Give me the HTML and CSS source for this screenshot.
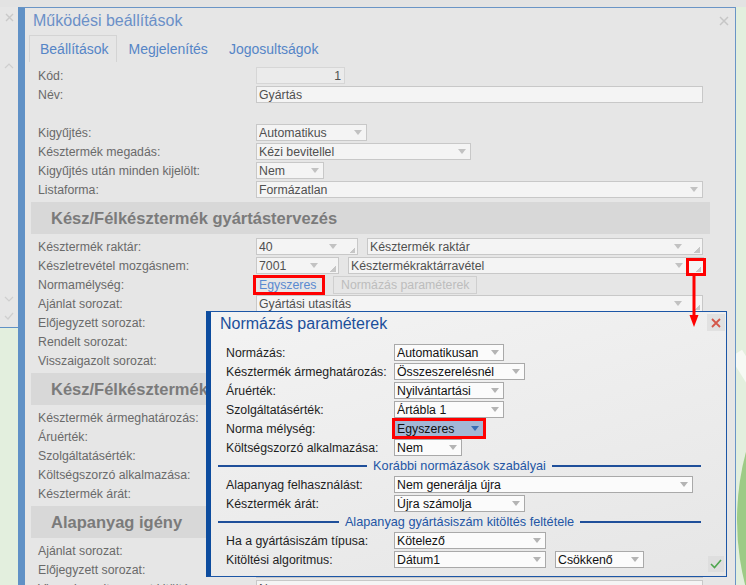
FILE: index.html
```html
<!DOCTYPE html>
<html lang="hu">
<head>
<meta charset="utf-8">
<title>Működési beállítások</title>
<link rel="stylesheet" href="styles.css">
</head>
<body>
<div class="topstrip"></div>
<div class="sidebar">
  <svg class="sb-x" width="9" height="9" viewBox="0 0 9 9"><path d="M1 1L8 8M8 1L1 8" stroke="#c9c9c9" stroke-width="1.4" fill="none"/></svg>
  <svg class="sb-up" width="10" height="6" viewBox="0 0 10 6"><polyline points="1,5 5,1 9,5" stroke="#cfcfcf" stroke-width="1.2" fill="none"/></svg>
  <div class="sb-fill"></div>
  <svg class="sb-down" width="10" height="6" viewBox="0 0 10 6"><polyline points="1,1 5,5 9,1" stroke="#cfcfcf" stroke-width="1.2" fill="none"/></svg>
  <svg class="sb-chk" width="10" height="8" viewBox="0 0 10 8"><polyline points="1,4 4,7 9,1" stroke="#cfcfcf" stroke-width="1.2" fill="none"/></svg>
</div>
<div class="deco-white"></div>
<div class="deco-green"></div>

<div class="win">
  <div class="win-head">
    <span class="win-title">Működési beállítások</span>
    <svg class="win-x" width="10" height="10" viewBox="0 0 10 10"><path d="M1 1L9 9M9 1L1 9" stroke="#c6c6c6" stroke-width="1.5" fill="none"/></svg>
  </div>
  <div class="tabs">
    <div class="tab active">Beállítások</div>
    <div class="tab">Megjelenítés</div>
    <div class="tab">Jogosultságok</div>
  </div>
  <div class="form">
    <div class="row"><span class="lbl">Kód:</span><div class="inp w89 ro"><span class="val right">1</span></div></div>
    <div class="row"><span class="lbl">Név:</span><div class="inp w447"><span class="val">Gyártás</span></div></div>
    <div class="row"></div>
    <div class="row"><span class="lbl">Kigyűjtés:</span><div class="inp w111"><span class="val">Automatikus</span><span class="dd"></span></div></div>
    <div class="row"><span class="lbl">Késztermék megadás:</span><div class="inp w215"><span class="val">Kézi bevitellel</span><span class="dd"></span></div></div>
    <div class="row"><span class="lbl">Kigyűjtés után minden kijelölt:</span><div class="inp w68"><span class="val">Nem</span><span class="dd"></span></div></div>
    <div class="row"><span class="lbl">Listaforma:</span><div class="inp w447"><span class="val">Formázatlan</span><span class="dd"></span></div></div>

    <div class="sec">Kész/Félkésztermék gyártástervezés</div>
    <div class="row"><span class="lbl">Késztermék raktár:</span><div class="inp w102"><span class="val">40</span><span class="dd"></span><span class="rz"></span></div><div class="inp w336 gap"><span class="val">Késztermék raktár</span><span class="dd"></span><span class="rz"></span></div></div>
    <div class="row"><span class="lbl">Készletrevétel mozgásnem:</span><div class="inp w83"><span class="val">7001</span><span class="dd"></span><span class="rz"></span></div><div class="inp w356 gap"><span class="val">Késztermékraktárravétel</span><span class="dd"></span><span class="rz hl"></span></div></div>
    <div class="row"><span class="lbl">Normamélység:</span><span class="link hl">Egyszeres</span><span class="btn">Normázás paraméterek</span></div>
    <div class="row"><span class="lbl">Ajánlat sorozat:</span><div class="inp w447"><span class="val">Gyártási utasítás</span><span class="dd"></span><span class="rz"></span></div></div>
    <div class="row"><span class="lbl">Előjegyzett sorozat:</span><div class="inp w447"><span class="val">Gyártási utasítás</span><span class="dd"></span></div></div>
    <div class="row"><span class="lbl">Rendelt sorozat:</span><div class="inp w447"><span class="val">Gyártási utasítás</span><span class="dd"></span></div></div>
    <div class="row"><span class="lbl">Visszaigazolt sorozat:</span><div class="inp w447"><span class="val">Gyártási utasítás</span><span class="dd"></span></div></div>

    <div class="sec">Kész/Félkésztermék árképzés</div>
    <div class="row"><span class="lbl">Késztermék ármeghatározás:</span><div class="inp w215"><span class="val">Összeszerelésnél</span><span class="dd"></span></div></div>
    <div class="row"><span class="lbl">Áruérték:</span><div class="inp w215"><span class="val">Nyilvántartási</span><span class="dd"></span></div></div>
    <div class="row"><span class="lbl">Szolgáltatásérték:</span><div class="inp w215"><span class="val">Ártábla 1</span><span class="dd"></span></div></div>
    <div class="row"><span class="lbl">Költségszorzó alkalmazása:</span><div class="inp w68"><span class="val">Nem</span><span class="dd"></span></div></div>
    <div class="row"><span class="lbl">Késztermék árát:</span><div class="inp w215"><span class="val">Újra számolja</span><span class="dd"></span></div></div>

    <div class="sec">Alapanyag igény</div>
    <div class="row"><span class="lbl">Ajánlat sorozat:</span><div class="inp w447"><span class="val">Anyagigénylés</span><span class="dd"></span></div></div>
    <div class="row"><span class="lbl">Előjegyzett sorozat:</span><div class="inp w447"><span class="val">Anyagigénylés</span><span class="dd"></span></div></div>
    <div class="row"><span class="lbl">Visszaigazolt sorozat kitöltése:</span><div class="inp w447"><span class="val">Nem</span><span class="dd"></span></div></div>
  </div>
</div>

<div class="dlg">
  <div class="dlg-head">
    <span class="dlg-title">Normázás paraméterek</span>
    <span class="dlg-x"><svg width="10" height="10" viewBox="0 0 10 10"><path d="M1 1L9 9M9 1L1 9" stroke="#d4574a" stroke-width="1.8" fill="none"/></svg></span>
  </div>
  <div class="dlg-form">
    <div class="drow"><span class="dlbl">Normázás:</span><div class="dsel d110"><span class="val">Automatikusan</span><span class="dd"></span></div></div>
    <div class="drow"><span class="dlbl">Késztermék ármeghatározás:</span><div class="dsel d131"><span class="val">Összeszerelésnél</span><span class="dd"></span></div></div>
    <div class="drow"><span class="dlbl">Áruérték:</span><div class="dsel d110"><span class="val">Nyilvántartási</span><span class="dd"></span></div></div>
    <div class="drow"><span class="dlbl">Szolgáltatásérték:</span><div class="dsel d110"><span class="val">Ártábla 1</span><span class="dd"></span></div></div>
    <div class="drow"><span class="dlbl">Norma mélység:</span><div class="dsel d90 sel-on"><span class="val">Egyszeres</span><span class="dd"></span></div></div>
    <div class="drow"><span class="dlbl">Költségszorzó alkalmazása:</span><div class="dsel d68"><span class="val">Nem</span><span class="dd"></span></div></div>
    <div class="grp"><span>Korábbi normázások szabályai</span></div>
    <div class="drow"><span class="dlbl">Alapanyag felhasználást:</span><div class="dsel d299"><span class="val">Nem generálja újra</span><span class="dd"></span></div></div>
    <div class="drow"><span class="dlbl">Késztermék árát:</span><div class="dsel d131"><span class="val">Újra számolja</span><span class="dd"></span></div></div>
    <div class="grp"><span>Alapanyag gyártásiszám kitöltés feltétele</span></div>
    <div class="drow"><span class="dlbl">Ha a gyártásiszám típusa:</span><div class="dsel d152"><span class="val">Kötelező</span><span class="dd"></span></div></div>
    <div class="drow"><span class="dlbl">Kitöltési algoritmus:</span><div class="dsel d152"><span class="val">Dátum1</span><span class="dd"></span></div><div class="dsel d89 gap"><span class="val">Csökkenő</span><span class="dd"></span></div>
      <span class="ok"><svg width="12" height="10" viewBox="0 0 12 10"><polyline points="1,5 4.5,8.5 11,1" stroke="#4ea64e" stroke-width="1.6" fill="none"/></svg></span>
    </div>
  </div>
</div>

<svg class="arrow" width="10" height="53" viewBox="0 0 10 53"><line x1="5" y1="0" x2="5" y2="42" stroke="#ff0000" stroke-width="3"/><polygon points="0.5,40 9.5,40 5,52" fill="#ff0000"/></svg>
</body>
</html>
```

FILE: styles.css
```css
html, body {
  margin: 0;
  padding: 0;
}
body {
  position: relative;
  width: 746px;
  height: 585px;
  overflow: hidden;
  background: #e3efde;
  font-family: "Liberation Sans", Arial, sans-serif;
}

/* desktop shell */
.topstrip {
  position: absolute;
  left: 0;
  top: 0;
  width: 746px;
  height: 7px;
  background: #e3e3e3;
}
.sidebar {
  position: absolute;
  left: 0;
  top: 7px;
  width: 18px;
  height: 320px;
  background: #e6e6e6;
  border-bottom: 1px solid #6091c6;
  display: flex;
  flex-direction: column;
  align-items: center;
}
.sidebar svg { display: block; flex: none; }
.sb-x { margin-top: 6px; }
.sb-up { margin-top: 41px; }
.sb-fill { flex: 1; }
.sb-chk { margin-top: 10px; margin-bottom: 7px; }

.deco-white {
  position: absolute;
  left: 722px;
  top: 372px;
  width: 60px;
  height: 14px;
  background: #f6f9f4;
  transform: rotate(58deg);
}
.deco-green {
  position: absolute;
  left: 737px;
  top: 320px;
  width: 300px;
  height: 400px;
  border-radius: 50%;
  background: #9dcb86;
}

/* main window */
.win {
  position: absolute;
  left: 18px;
  top: 7px;
  width: 710px;
  height: 620px;
  background: #e6e6e6;
  border-left: 7px solid #6091c6;
  border-top: 1px solid #6a95c6;
  border-right: 1px solid #6a95c6;
}
.win-head {
  height: 25px;
  display: flex;
  align-items: center;
  padding: 0 6px 0 8px;
}
.win-title {
  font-size: 16px;
  color: #6b90c8;
  flex: 1;
}
.win-x { display: block; }

.tabs {
  margin-top: 2px;
  height: 27px;
  display: flex;
  padding-left: 4px;
}
.tab {
  box-sizing: border-box;
  padding: 5px 10px 0 11px;
  font-size: 14px;
  line-height: 19px;
  color: #5585c6;
}
.tab.active {
  padding: 4px 8px 0 10px;
  border: 1px solid #d4d4d4;
  border-bottom: none;
}

.form { margin-top: 4px; }
.row {
  display: flex;
  align-items: center;
  height: 19px;
  padding-left: 13px;
  font-size: 12.3px;
}
.lbl {
  flex: none;
  width: 218px;
  color: #6a6a6a;
  white-space: nowrap;
}

.inp {
  flex: none;
  box-sizing: border-box;
  height: 17px;
  border: 1px solid #c8c8c8;
  background: #f4f4f4;
  color: #505050;
  padding-left: 2px;
  display: flex;
  align-items: center;
}
.inp.ro {
  background: #ebebeb;
  border-color: #d6d6d6;
  padding-right: 3px;
}
.val {
  flex: 1;
  white-space: nowrap;
  overflow: hidden;
}
.val.right { text-align: right; }
.gap { margin-left: 9px; }

.w68 { width: 68px; }
.w83 { width: 83px; }
.w89 { width: 89px; }
.w102 { width: 102px; }
.w111 { width: 111px; }
.w215 { width: 215px; }
.w336 { width: 336px; }
.w356 { width: 356px; }
.w447 { width: 447px; }

.dd {
  flex: none;
  width: 0;
  height: 0;
  border-left: 4px solid transparent;
  border-right: 4px solid transparent;
  border-top: 5px solid #c2c2c2;
  margin-right: 4px;
}
.inp .dd + .rz { margin-left: 2px; }
.rz {
  flex: none;
  align-self: flex-end;
  width: 14px;
  height: 12px;
  background: linear-gradient(135deg, transparent 50%, #c6c6c6 50%) no-repeat right 2px bottom 1px / 6px 6px;
}
.hl { outline: 3px solid #ff0000; }

.link {
  flex: none;
  box-sizing: border-box;
  width: 66px;
  height: 14px;
  line-height: 14px;
  padding-left: 3px;
  color: #5a8ad0;
}
.btn {
  flex: none;
  box-sizing: border-box;
  margin-left: 11px;
  height: 18px;
  border: 1px solid #cfcfcf;
  padding: 0 7px;
  color: #bdbdbd;
  display: flex;
  align-items: center;
}

.sec {
  margin: 3px 25px 3px 6px;
  height: 32px;
  padding-left: 20px;
  background: #d8d8d8;
  font-weight: bold;
  font-size: 16.5px;
  line-height: 32px;
  color: #7b7b7b;
  white-space: nowrap;
}

.arrow {
  position: absolute;
  left: 689px;
  top: 275px;
  display: block;
}

/* dialog */
.dlg {
  position: absolute;
  left: 206px;
  top: 311px;
  width: 515px;
  height: 264px;
  border: 1px solid #1c56a6;
  border-left: 5px solid #0d4c9e;
  background: linear-gradient(165deg, #f3f3f3 0%, #e6e6e6 100%);
  font-size: 12.3px;
}
.dlg-head {
  height: 24px;
  display: flex;
  align-items: center;
  padding-left: 9px;
}
.dlg-title {
  flex: 1;
  font-size: 16px;
  color: #1b4f9b;
}
.dlg-x {
  align-self: flex-start;
  margin-top: 2px;
  margin-right: 1px;
  width: 18px;
  height: 17px;
  background: #e1e1e1;
  display: flex;
  align-items: center;
  justify-content: center;
}
.dlg-x svg, .ok svg { display: block; }
.dlg-form { padding-top: 7px; }
.drow {
  display: flex;
  align-items: center;
  height: 19px;
  padding-left: 15px;
}
.dlbl {
  flex: none;
  width: 168px;
  color: #1e1e1e;
  white-space: nowrap;
}
.dsel {
  flex: none;
  box-sizing: border-box;
  height: 17px;
  border: 1px solid #a9a9a9;
  background: #fbfbfb;
  color: #111;
  padding-left: 2px;
  display: flex;
  align-items: center;
}
.dsel .dd { border-top-color: #b4b4b4; }
.d68 { width: 68px; }
.d89 { width: 89px; }
.d90 { width: 90px; }
.d110 { width: 110px; }
.d131 { width: 131px; }
.d152 { width: 152px; }
.d299 { width: 299px; }
.sel-on {
  background: #a3b7d6;
  border-color: #8ea5c9;
  outline: 3px solid #ff0000;
  outline-offset: -1px;
}
.sel-on .dd { border-top-color: #3a6db5; }

.grp {
  display: flex;
  align-items: center;
  height: 18px;
  padding: 0 25px 0 7px;
  color: #2356a5;
  font-size: 12.7px;
}
.grp::before, .grp::after {
  content: "";
  flex: 1;
  border-top: 2px solid #1f4f9a;
}
.grp span {
  padding: 0 6px;
  white-space: nowrap;
}

.ok {
  margin-left: auto;
  margin-right: 2px;
  align-self: flex-start;
  margin-top: 6px;
  width: 16px;
  height: 16px;
  background: #dedede;
  display: flex;
  align-items: center;
  justify-content: center;
}
```
